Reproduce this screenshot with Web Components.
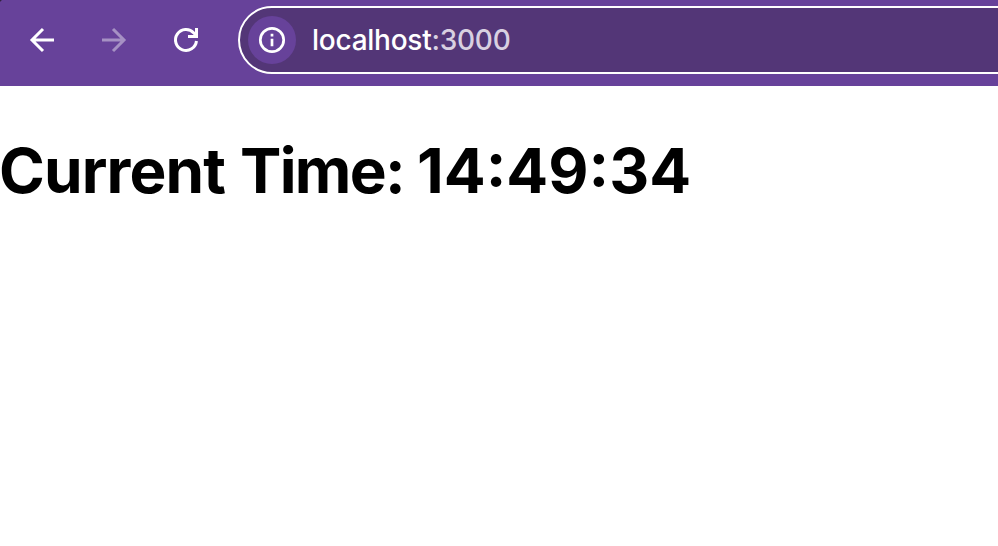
<!DOCTYPE html>
<html lang="en"><head><meta charset="utf-8"><title>localhost:3000</title>
<style>body{margin:0;background:#fff;overflow:hidden}</style></head><body>
<browser-toolbar><address-field slot="address"><span slot="host">localhost</span><span slot="port">:3000</span></address-field></browser-toolbar>
<time-heading>Current <span slot="label">Time: </span><span slot="time">14:49:34</span></time-heading>
<script>
const define = (name, html) => customElements.define(name, class extends HTMLElement {
  constructor(){ super(); this.attachShadow({mode:'open'}).innerHTML = html; }
});
define('nav-icons', `<style>
:host{display:flex;gap:48px;color:#fff}
svg{display:block;width:24px;height:24px;overflow:visible;fill:none;stroke:currentColor;stroke-width:3}
.off{opacity:.42}
</style>
<svg viewBox="0 0 24 24"><path d="M24 12H3M13 1L2 12l11 11"/></svg>
<svg class="off" viewBox="0 0 24 24"><path d="M0 12H21M11 1l11 11-11 11"/></svg>
<svg viewBox="0 0 24 24"><path d="M22.45 13A10.5 10.5 0 1 1 19.8 4.9l2.7 3.2M22.5 0v8.5H14"/></svg>`);
define('address-field', `<style>
:host{display:flex;box-sizing:border-box;width:820px;height:68px;border:2px solid #fff;border-radius:34px;background:#533677;align-items:center;padding-left:8px;color:#fff;font:450 28px Inter,"Liberation Sans",sans-serif}
.info{display:grid;place-items:center;width:48px;height:48px;border-radius:50%;background:#67429a;margin-right:16px}
svg{width:28px;height:28px;fill:none;stroke:#fff;stroke-width:2.7}
.port{color:#d9d0e1}
.url{white-space:nowrap;letter-spacing:-.25px}
</style><div class="info"><svg viewBox="0 0 28 28"><circle cx="14" cy="14" r="11.7"/><path d="M14 12.7V20.3M14 7.7v2.7"/></svg></div><div class="url"><slot name="host"></slot><span class="port"><slot name="port"></slot></span></div>`);
define('browser-toolbar', `<style>
:host{display:flex;box-sizing:border-box;height:86px;background:radial-gradient(circle at 0 0,#32233f 1px,transparent 2px),#67429a;padding:6px 0 0 30px;overflow:hidden}
nav-icons{height:68px;align-items:center;margin-right:40px}
::slotted(*){flex:none}
</style><nav-icons></nav-icons><slot name="address"></slot>`);
define('time-heading', `<style>
:host{display:block;padding-top:42px}
h1{display:flex;margin:0;font:700 62px/86px Inter,"Liberation Sans",sans-serif;letter-spacing:-.85px;color:#000;white-space:pre;text-indent:-1px}
.word{width:241px}
.label{width:177px;letter-spacing:-1.7px}
.time{letter-spacing:0}
</style><h1><span class="word"><slot></slot></span><span class="label"><slot name="label"></slot></span><span class="time"><slot name="time"></slot></span></h1>`);
</script></body></html>
